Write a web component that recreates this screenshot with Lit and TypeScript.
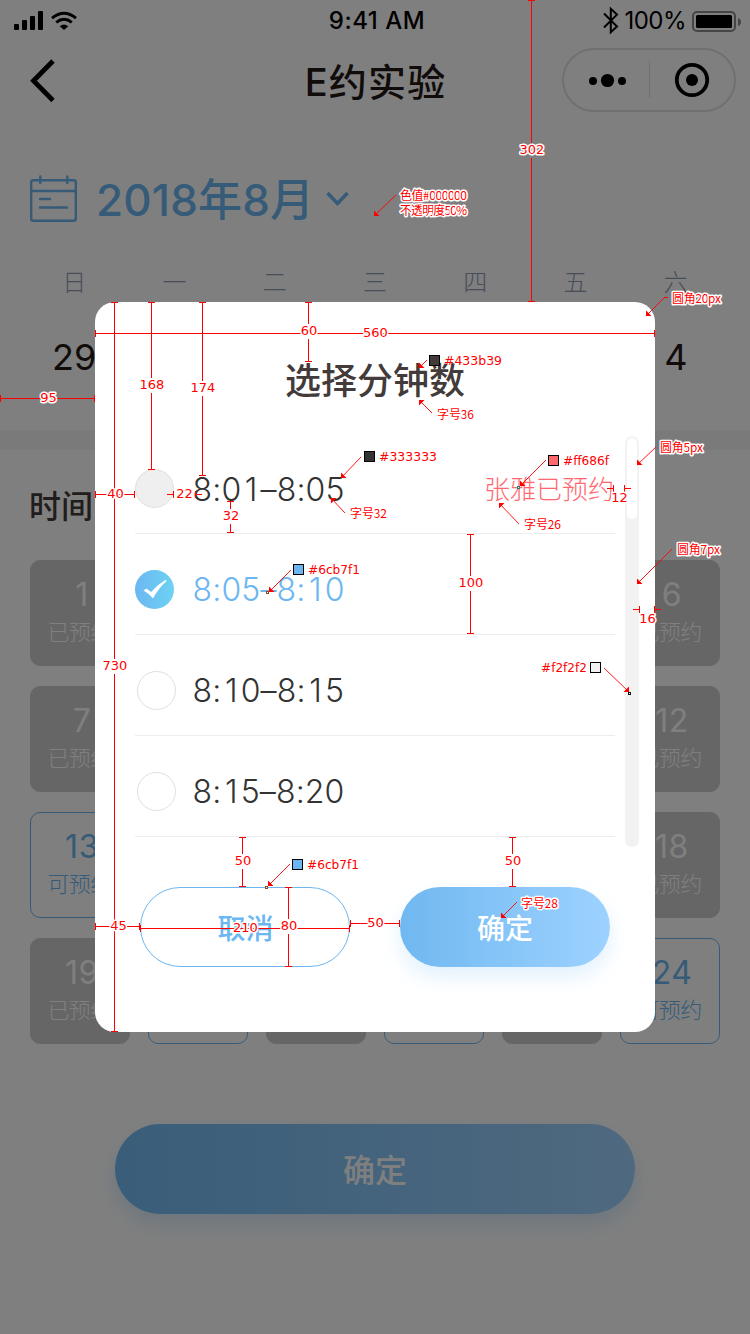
import { LitElement, html, svg, css } from 'lit';
import { customElement } from 'lit/decorators.js';
import { classMap } from 'lit/directives/class-map.js';

type Slot = { n?: number; open?: boolean };

const cover: Slot = {};
const slots: Slot[] = [
  { n: 1 }, cover, cover, cover, cover, { n: 6 },
  { n: 7 }, cover, cover, cover, cover, { n: 12 },
  { n: 13, open: true }, cover, cover, cover, cover, { n: 18 },
  { n: 19 }, { open: true }, cover, { open: true }, cover, { n: 24, open: true },
];

const weekdays = ['日', '一', '二', '三', '四', '五', '六'];
const days = ['29', '', '', '', '', '', '4'];

@customElement('status-bar')
class StatusBar extends LitElement {
  static styles = css`
    :host { display: grid; grid-template-columns: 1fr auto 1fr; align-items: center; height: 40px; padding: 0 8px 0 14px; box-sizing: border-box; font: 500 24px/40px Inter, "Liberation Sans", sans-serif; color: #000; }
    .side { display: flex; align-items: center; height: 40px; }
    .right { justify-content: flex-end; }
    .time { letter-spacing: .5px; padding: 1px 0 0; margin-right: -2px; transform: translateX(-2px); }
    .pct { font-size: 24px; font-weight: 400; margin: 1px 6px 0 5px; letter-spacing: -.5px; }
    svg { display: block; }
  `;
  render() {
    return html`
      <div class="side">
        <svg width="64" height="40" viewBox="14 0 64 40">
          <rect x="14" y="23" width="5" height="6" rx="1"/><rect x="22" y="19" width="5" height="10" rx="1"/>
          <rect x="30" y="15" width="5" height="14" rx="1"/><rect x="38" y="10" width="5" height="19" rx="1"/>
          <g fill="none" stroke="#000" stroke-width="2.9"><path d="M52 17.2Q64 7.2 76 17.2"/><path d="M56.2 21.4Q64 15.2 71.8 21.4"/></g>
          <path d="M59.8 25.2Q64 21.6 68.2 25.2L64 29Z"/>
        </svg>
      </div>
      <div class="time">9:41 AM</div>
      <div class="side right">
        <svg width="16" height="40" viewBox="604 0 16 40"><path d="M605 12.5L618 25.5L611.8 31.3V7.8L618 13.6L605 26.5" fill="none" stroke="#000" stroke-width="2"/></svg>
        <span class="pct">100%</span>
        <svg width="50" height="40" viewBox="692 0 50 40">
          <rect x="693" y="11" width="42" height="19" rx="4" fill="none" stroke="#8c8c8c" stroke-width="2"/>
          <rect x="696" y="14" width="36" height="13" rx="1.5"/><path d="M738 17Q741 18 741 21T738 25Z" fill="#8c8c8c"/>
        </svg>
      </div>`;
  }
}

@customElement('booking-page')
class BookingPage extends LitElement {
  static styles = css`
    :host { display: flex; flex-direction: column; height: 1334px; background: #fff; }
    svg { display: block; }
    .nav { display: grid; grid-template-columns: 1fr auto 1fr; align-items: center; height: 80px; padding: 0 14px 0 30px; }
    .title { font-size: 38px; font-weight: 500; color: #231815; line-height: 76px; padding-top: 4px; letter-spacing: 1.2px; margin-left: -15px; font-family: Inter, "Noto Sans CJK SC", sans-serif; }
    .capsule { justify-self: end; }
    .month { display: flex; align-items: center; height: 70px; margin-top: 44px; padding-left: 30px; color: #6cb7f1; }
    .month span { font: 500 44px/68px Inter, "Noto Sans CJK SC", sans-serif; padding-top: 2px; margin: 0 12px 0 18px; letter-spacing: .15px; }
    .week { display: grid; grid-template-columns: repeat(7, 1fr); padding: 0 24px; text-align: center; }
    .wd { font-size: 24px; font-weight: 300; color: #8f9ab2; line-height: 36px; margin-top: 29px; height: 36px; }
    .day { font: 400 36px/60px Inter, "Liberation Sans", sans-serif; color: #231815; height: 60px; margin-top: 28px; }
    .band { height: 20px; background: #f5f5f5; margin-top: 43px; }
    .label { font-size: 32px; font-weight: 500; color: #433b39; line-height: 48px; height: 48px; margin: 30px 0 32px 29px; }
    .grid { display: grid; grid-template-columns: repeat(6, 100px); gap: 20px 18px; padding: 0 30px; }
    .slot { height: 106px; box-sizing: border-box; border-radius: 10px; background: #ccc; border: 1px solid #ccc; color: #fff; text-align: center; padding-top: 13px; }
    .slot.open { background: none; border-color: #6cb7f1; color: #6cb7f1; }
    .num { font: 400 32px/42px Inter, sans-serif; padding-left: 4px; height: 40px; letter-spacing: .5px; }
    .st { font-size: 22px; font-weight: 300; line-height: 32px; letter-spacing: -.6px; margin-left: -1px; }
    .go { width: 520px; height: 90px; border-radius: 45px; margin: 80px auto 0; background: linear-gradient(90deg, #74bbf3, #9ed3ff); box-shadow: 0 10px 20px rgba(108, 183, 241, .25); color: #fff; font-size: 32px; font-weight: 500; line-height: 88px; text-align: center; }
  `;
  render() {
    return html`
      <status-bar></status-bar>
      <div class="nav">
        <svg width="26" height="44" viewBox="30 58 26 44"><path d="M53 61L33.5 80.8L53 100.5" fill="none" stroke="#000" stroke-width="4.8"/></svg>
        <div class="title">E约实验</div>
        <svg class="capsule" width="174" height="64" viewBox="562 48 174 64">
          <rect x="563" y="49" width="172" height="62" rx="31" fill="none" stroke="#e0e0e0" stroke-width="2"/>
          <path d="M649.5 61V98" stroke="#e0e0e0"/>
          <circle cx="593" cy="81" r="4"/><circle cx="607.5" cy="80.5" r="6.6"/><circle cx="622" cy="81" r="4"/>
          <circle cx="692" cy="80" r="15.2" fill="none" stroke="#000" stroke-width="3.8"/><circle cx="692" cy="80" r="6"/>
        </svg>
      </div>
      <div class="month">
        <svg width="48" height="48" viewBox="30 175 48 48" fill="none" stroke="#6cb7f1" stroke-width="2.4" stroke-linecap="round">
          <rect x="31.2" y="180.2" width="44.6" height="40.6" rx="2"/><path d="M31 191H76M40.3 176.5V183M67.3 176.5V183M40 199H50M40 207.5H67"/>
        </svg>
        <span>2018年8月</span>
        <svg width="24" height="18" viewBox="325 190 24 18"><path d="M326.5 193L336.5 203.5L346.5 193" fill="none" stroke="#6cb7f1" stroke-width="3.6"/></svg>
      </div>
      <div class="week">${weekdays.map(w => html`<div class="wd">${w}</div>`)}${days.map(d => html`<div class="day">${d}</div>`)}</div>
      <div class="band"></div>
      <div class="label">时间</div>
      <div class="grid">
        ${slots.map(s => html`<div class=${classMap({ slot: true, open: !!s.open })}>
          ${s.n ? html`<div class="num">${s.n}</div><div class="st">${s.open ? '可预约' : '已预约'}</div>` : ''}
        </div>`)}
      </div>
      <div class="go">确定</div>`;
  }
}

@customElement('minute-dialog')
class MinuteDialog extends LitElement {
  static styles = css`
    :host { display: flex; flex-direction: column; width: 560px; height: 730px; box-sizing: border-box; border-radius: 20px; background: #fff; }
    .title { height: 54px; margin-top: 49px; font-size: 36px; line-height: 54px; font-weight: 500; color: #433b39; text-align: center; }
    .body { display: flex; margin-top: 29px; padding: 0 16px 0 40px; height: 415px; justify-content: space-between; }
    .list { width: 480px; }
    .row { display: flex; align-items: center; height: 101px; box-sizing: border-box; border-bottom: 1px solid #ededed; padding-top: 10px; color: #333; }
    .row:first-child { height: 100px; }
    .radio { box-sizing: border-box; width: 39px; height: 39px; border: 1px solid #e0e0e0; border-radius: 50%; margin-left: 2px; margin-right: 16px; }
    .taken .radio { background: #efefef; margin-left: 0; margin-right: 18px; }
    .on .radio { border: 0; margin-left: 0; margin-right: 18px; background: linear-gradient(90deg, #6cb7f1, #6dd2f3); }
    .on { color: #6cb7f1; }
    .radio svg { display: block; }
    .time { flex: 1; font: 350 32px/48px Inter, sans-serif; letter-spacing: .15px; padding: 2px 0 0 .5px; }
    .one { padding: 0 3px 0 3.5px; }
    .who { font-size: 26px; font-weight: 300; color: #ff686f; line-height: 48px; margin: 0 1px 2px 0; }
    .track { box-sizing: border-box; width: 14px; height: 411px; margin-top: 2px; border-radius: 7px; background: #f2f2f2; padding: 2px; }
    .thumb { height: 81px; border-radius: 5px; background: #fff; }
    .foot { display: flex; gap: 50px; padding: 0 45px; margin-top: 38px; }
    .btn { box-sizing: border-box; width: 210px; height: 80px; border-radius: 40px; font-size: 28px; font-weight: 500; line-height: 78px; text-align: center; }
    .cancel { border: 1px solid #6cb7f1; color: #6cb7f1; line-height: 78px; padding-left: 1px; }
    .ok { color: #fff; background: linear-gradient(90deg, #70b8f1, #9dd2ff); box-shadow: 0 10px 20px rgba(108, 183, 241, .2); line-height: 80px; }
  `;
  render() {
    const rows = [
      { t: '8:01–8:05', who: '张雅已预约' }, { t: '8:05–8:10', on: true }, { t: '8:10–8:15' }, { t: '8:15–8:20' },
    ];
    return html`
      <div class="title">选择分钟数</div>
      <div class="body">
        <div class="list">${rows.map(r => html`
          <div class=${classMap({ row: true, on: !!r.on, taken: !!r.who })}>
            <div class="radio">${r.on ? html`<svg width="39" height="39" viewBox="0 0 39 39"><path d="M8.5 20.5L11.5 18.5L16 22Q22.5 14.5 30.8 9.8L31.5 11.2Q23.5 18 18 28.5Q14 23.5 8.5 20.5Z" fill="#fff"/></svg>` : ''}</div>
            <div class="time">${r.t.split(/(1)/).map(p => p === '1' ? html`<span class="one">1</span>` : p)}</div>
            ${r.who ? html`<div class="who">${r.who}</div>` : ''}
          </div>`)}</div>
        <div class="track"><div class="thumb"></div></div>
      </div>
      <div class="foot"><div class="btn cancel">取消</div><div class="btn ok">确定</div></div>`;
  }
}

/* Vertical and horizontal measures: fixed coordinate, start, end, label, label centre. */
const vertical: [number, number, number, string, number][] = [
  [531, 0, 301, '302', 150], [151, 302, 469, '168', 385], [202, 302, 475, '174', 388], [308, 302, 361, '60', 331],
  [114, 302, 1031, '730', 666], [230, 501, 532, '32', 516], [470, 534, 633, '100', 583],
  [242, 837, 886, '50', 861], [512, 837, 886, '50', 861], [288, 887, 966, '80', 926],
];
const horizontal: [number, number, number, string, number, number][] = [
  [333, 95, 654, '560', 375, 333], [398, 0, 94, '95', 48, 398], [494, 95, 134, '40', 115, 494],
  [926, 95, 139, '45', 118, 926], [928, 140, 349, '210', 245, 928], [923, 350, 399, '50', 375, 923],
];
/* Narrow measures whose tails point inwards from outside. */
const narrow: [number, number, number, string, number, number][] = [
  [494, 173, 195, '22', 184, 494], [488, 613, 624, '12', 619, 498], [609, 639, 654, '16', 647, 619],
];
const arrows: [number, number, number, number][] = [
  [396, 195, 374, 216], [664, 298, 646, 316], [427, 360, 419, 368], [432, 413, 419, 400], [361, 457, 341, 478],
  [345, 513, 331, 498], [546, 460, 520, 486], [519, 524, 499, 503], [656, 447, 637, 465], [291, 570, 269, 592],
  [672, 549, 637, 584], [604, 668, 629, 692], [290, 864, 268, 886], [517, 902, 501, 918],
];
const swatches: [number, number, string][] = [
  [429, 355, '#433b39'], [364, 451, '#333333'], [548, 455, '#ff686f'], [293, 564, '#6cb7f1'], [590, 662, '#f2f2f2'], [292, 859, '#6cb7f1'],
];
const codes: [number, number, number, string][] = [
  [444, 361, 58, '#433b39'], [379, 457, 58, '#333333'], [563, 461, 46, '#ff686f'],
  [308, 570, 52, '#6cb7f1'], [541, 668, 46, '#f2f2f2'], [307, 865, 52, '#6cb7f1'],
];
const notes: [number, number, number, string][] = [
  [400, 195, 67, '色值#000000'], [400, 210, 67, '不透明度50%'], [672, 298, 49, '圆角20px'], [437, 414, 37, '字号36'],
  [350, 513, 37, '字号32'], [660, 447, 43, '圆角5px'], [524, 524, 37, '字号26'], [677, 549, 43, '圆角7px'], [521, 903, 37, '字号28'],
];
const dots: [number, number, string][] = [[518, 487, '#148a80'], [267, 592, '#8a4b14'], [629, 693, '#111'], [266, 887, '#8a4b14']];

@customElement('measure-layer')
class MeasureLayer extends LitElement {
  static styles = css`
    :host { display: block; }
    svg { display: block; }
    .line { stroke: #f00; stroke-width: 1; fill: none; shape-rendering: crispEdges; }
    .arrow { stroke: #f00; stroke-width: .9; fill: none; }
    .head { fill: #f00; }
    .fig, .code, .note { fill: #f00; stroke: #fff; stroke-width: 3px; paint-order: stroke; stroke-linejoin: round; }
    .fig { font: 13px "DejaVu Sans", sans-serif; text-anchor: middle; }
    .code { font: 13px "DejaVu Sans", sans-serif; }
    .note { font: 12px "Noto Sans CJK SC", sans-serif; }
    .bare { stroke: none; }
  `;
  private fig(x: number, y: number, t: string) {
    return svg`<text class="fig" x=${x + .5} y=${y + 4}>${t}</text>`;
  }
  render() {
    return html`<svg width="750" height="1334" viewBox="0 0 750 1334">
      ${vertical.map(([x, a, b, , c]) => svg`<path class="line" d="M${x + .5} ${a}V${c - 7}M${x + .5} ${c + 8}V${b + 1}M${x - 3} ${a + .5}h7M${x - 3} ${b + .5}h7"/>`)}
      ${horizontal.map(([y, a, b]) => svg`<path class="line" d="M${a} ${y + .5}H${b + 1}M${a + .5} ${y - 3}v7M${b + .5} ${y - 3}v7"/>`)}
      ${narrow.map(([y, a, b]) => svg`<path class="line" d="M${a - 6} ${y + .5}H${a}M${b} ${y + .5}h7M${a + .5} ${y - 3}v7M${b + .5} ${y - 3}v7"/>`)}
      <path class="line" d="M664 297.5h4"/>
      ${arrows.map(([x1, y1, x2, y2]) => {
        const dx = x1 > x2 ? 5.5 : -5.5, dy = y1 > y2 ? 5.5 : -5.5;
        return svg`<path class="arrow" d="M${x1} ${y1}L${x2} ${y2}"/><path class="head" d="M${x2} ${y2}v${dy}l${dx} ${-dy}z"/>`;
      })}
      ${dots.map(([x, y, c]) => svg`<rect x=${x - .5} y=${y - .5} width="2" height="2" fill="#fff" stroke=${c}/>`)}
      ${swatches.map(([x, y, c]) => svg`<rect x=${x + .5} y=${y + .5} width="10" height="10" fill=${c} stroke="#000"/>`)}
      ${vertical.map(([x, , , t, c]) => this.fig(x + .5, c, t))}
      ${horizontal.map(([, , , t, c, y]) => this.fig(c, y, t))}
      ${narrow.map(([, , , t, x, y]) => this.fig(x, y, t))}
      ${codes.map(([x, y, w, t]) => svg`<text class="code bare" x=${x} y=${y + 4} textLength=${w} lengthAdjust="spacingAndGlyphs">${t}</text>`)}
      ${notes.map(([x, y, w, t]) => svg`<text class="note" x=${x} y=${y + 5} textLength=${w}>${t}</text>`)}
    </svg>`;
  }
}

@customElement('app-root')
class AppRoot extends LitElement {
  static styles = css`
    :host { display: block; position: relative; width: 750px; height: 1334px; overflow: hidden; font-family: "Noto Sans CJK SC", sans-serif; }
    .shade { position: absolute; inset: 0; background: rgba(0, 0, 0, .5); display: flex; justify-content: center; align-items: center; }
    .measures { position: absolute; inset: 0; }
  `;
  render() {
    return html`
      <booking-page></booking-page>
      <div class="shade"><minute-dialog></minute-dialog></div>
      <measure-layer class="measures"></measure-layer>`;
  }
}
